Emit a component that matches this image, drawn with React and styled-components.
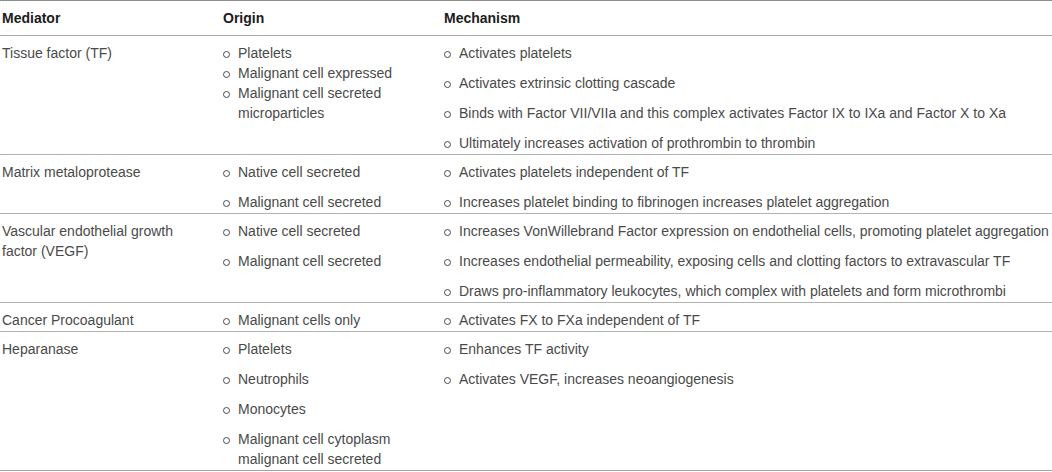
import React from 'react';
import styled, { createGlobalStyle } from 'styled-components';

const GlobalStyle = createGlobalStyle`
  html, body {
    margin: 0;
    padding: 0;
    background: #ffffff;
  }
  body {
    font-family: "Liberation Sans", Arial, sans-serif;
    font-size: 14px;
    color: #4a4a4a;
  }
`;

const columns = '222px 221px 1fr';

const Table = styled.div`
  width: 1052px;
  border-top: 1px solid #8f8f8f;
  border-bottom: 1px solid #a3a3a3;
`;

const HeaderRow = styled.div`
  display: grid;
  grid-template-columns: ${columns};
  height: 34px;
  align-items: center;
  border-bottom: 1px solid #ababab;
  font-weight: 700;
  color: #1c1c1c;
  line-height: 20px;
`;

const Row = styled.div`
  display: grid;
  grid-template-columns: ${columns};
  padding: 7px 0 1px;
  line-height: 20px;
  border-bottom: ${p => (p.$last ? 'none' : '1px solid #b3b3b3')};
`;

const Cell = styled.div`
  padding-left: ${p => p.$indent || 0}px;
  min-width: 0;
`;

const List = styled.ul`
  list-style: none;
  margin: 0;
  padding: 0;
  display: flex;
  flex-direction: column;
  gap: ${p => (p.$tight ? 0 : 10)}px;
`;

const Item = styled.li`
  display: flex;
  align-items: flex-start;
  white-space: nowrap;

  &::before {
    content: "";
    flex: none;
    box-sizing: border-box;
    width: 7px;
    height: 7px;
    margin: 8px 8px 0 1px;
    border: 1px solid #4a4a4a;
    border-radius: 50%;
  }
`;

const rows = [
  {
    mediator: ['Tissue factor (TF)'],
    tight: true,
    origin: [
      ['Platelets'],
      ['Malignant cell expressed'],
      ['Malignant cell secreted', 'microparticles'],
    ],
    mechanism: [
      'Activates platelets',
      'Activates extrinsic clotting cascade',
      'Binds with Factor VII/VIIa and this complex activates Factor IX to IXa and Factor X to Xa',
      'Ultimately increases activation of prothrombin to thrombin',
    ],
  },
  {
    mediator: ['Matrix metaloprotease'],
    origin: [['Native cell secreted'], ['Malignant cell secreted']],
    mechanism: [
      'Activates platelets independent of TF',
      'Increases platelet binding to fibrinogen increases platelet aggregation',
    ],
  },
  {
    mediator: ['Vascular endothelial growth', 'factor (VEGF)'],
    origin: [['Native cell secreted'], ['Malignant cell secreted']],
    mechanism: [
      'Increases VonWillebrand Factor expression on endothelial cells, promoting platelet aggregation',
      'Increases endothelial permeability, exposing cells and clotting factors to extravascular TF',
      'Draws pro-inflammatory leukocytes, which complex with platelets and form microthrombi',
    ],
  },
  {
    mediator: ['Cancer Procoagulant'],
    origin: [['Malignant cells only']],
    mechanism: ['Activates FX to FXa independent of TF'],
  },
  {
    mediator: ['Heparanase'],
    origin: [
      ['Platelets'],
      ['Neutrophils'],
      ['Monocytes'],
      ['Malignant cell cytoplasm', 'malignant cell secreted'],
    ],
    mechanism: ['Enhances TF activity', 'Activates VEGF, increases neoangiogenesis'],
  },
];

const Lines = ({ lines }) =>
  lines.map((line, i) => (
    <React.Fragment key={i}>
      {i > 0 && <br />}
      {line}
    </React.Fragment>
  ));

export default function App() {
  return (
    <>
      <GlobalStyle />
      <Table>
        <HeaderRow>
          <Cell $indent={2}>Mediator</Cell>
          <Cell $indent={1}>Origin</Cell>
          <Cell $indent={1}>Mechanism</Cell>
        </HeaderRow>
        {rows.map((row, i) => (
          <Row key={row.mediator[0]} $last={i === rows.length - 1}>
            <Cell $indent={2}>
              <Lines lines={row.mediator} />
            </Cell>
            <Cell>
              <List $tight={row.tight}>
                {row.origin.map(o => (
                  <Item key={o[0]}>
                    <span>
                      <Lines lines={o} />
                    </span>
                  </Item>
                ))}
              </List>
            </Cell>
            <Cell>
              <List>
                {row.mechanism.map(m => (
                  <Item key={m}>
                    <span>{m}</span>
                  </Item>
                ))}
              </List>
            </Cell>
          </Row>
        ))}
      </Table>
    </>
  );
}
